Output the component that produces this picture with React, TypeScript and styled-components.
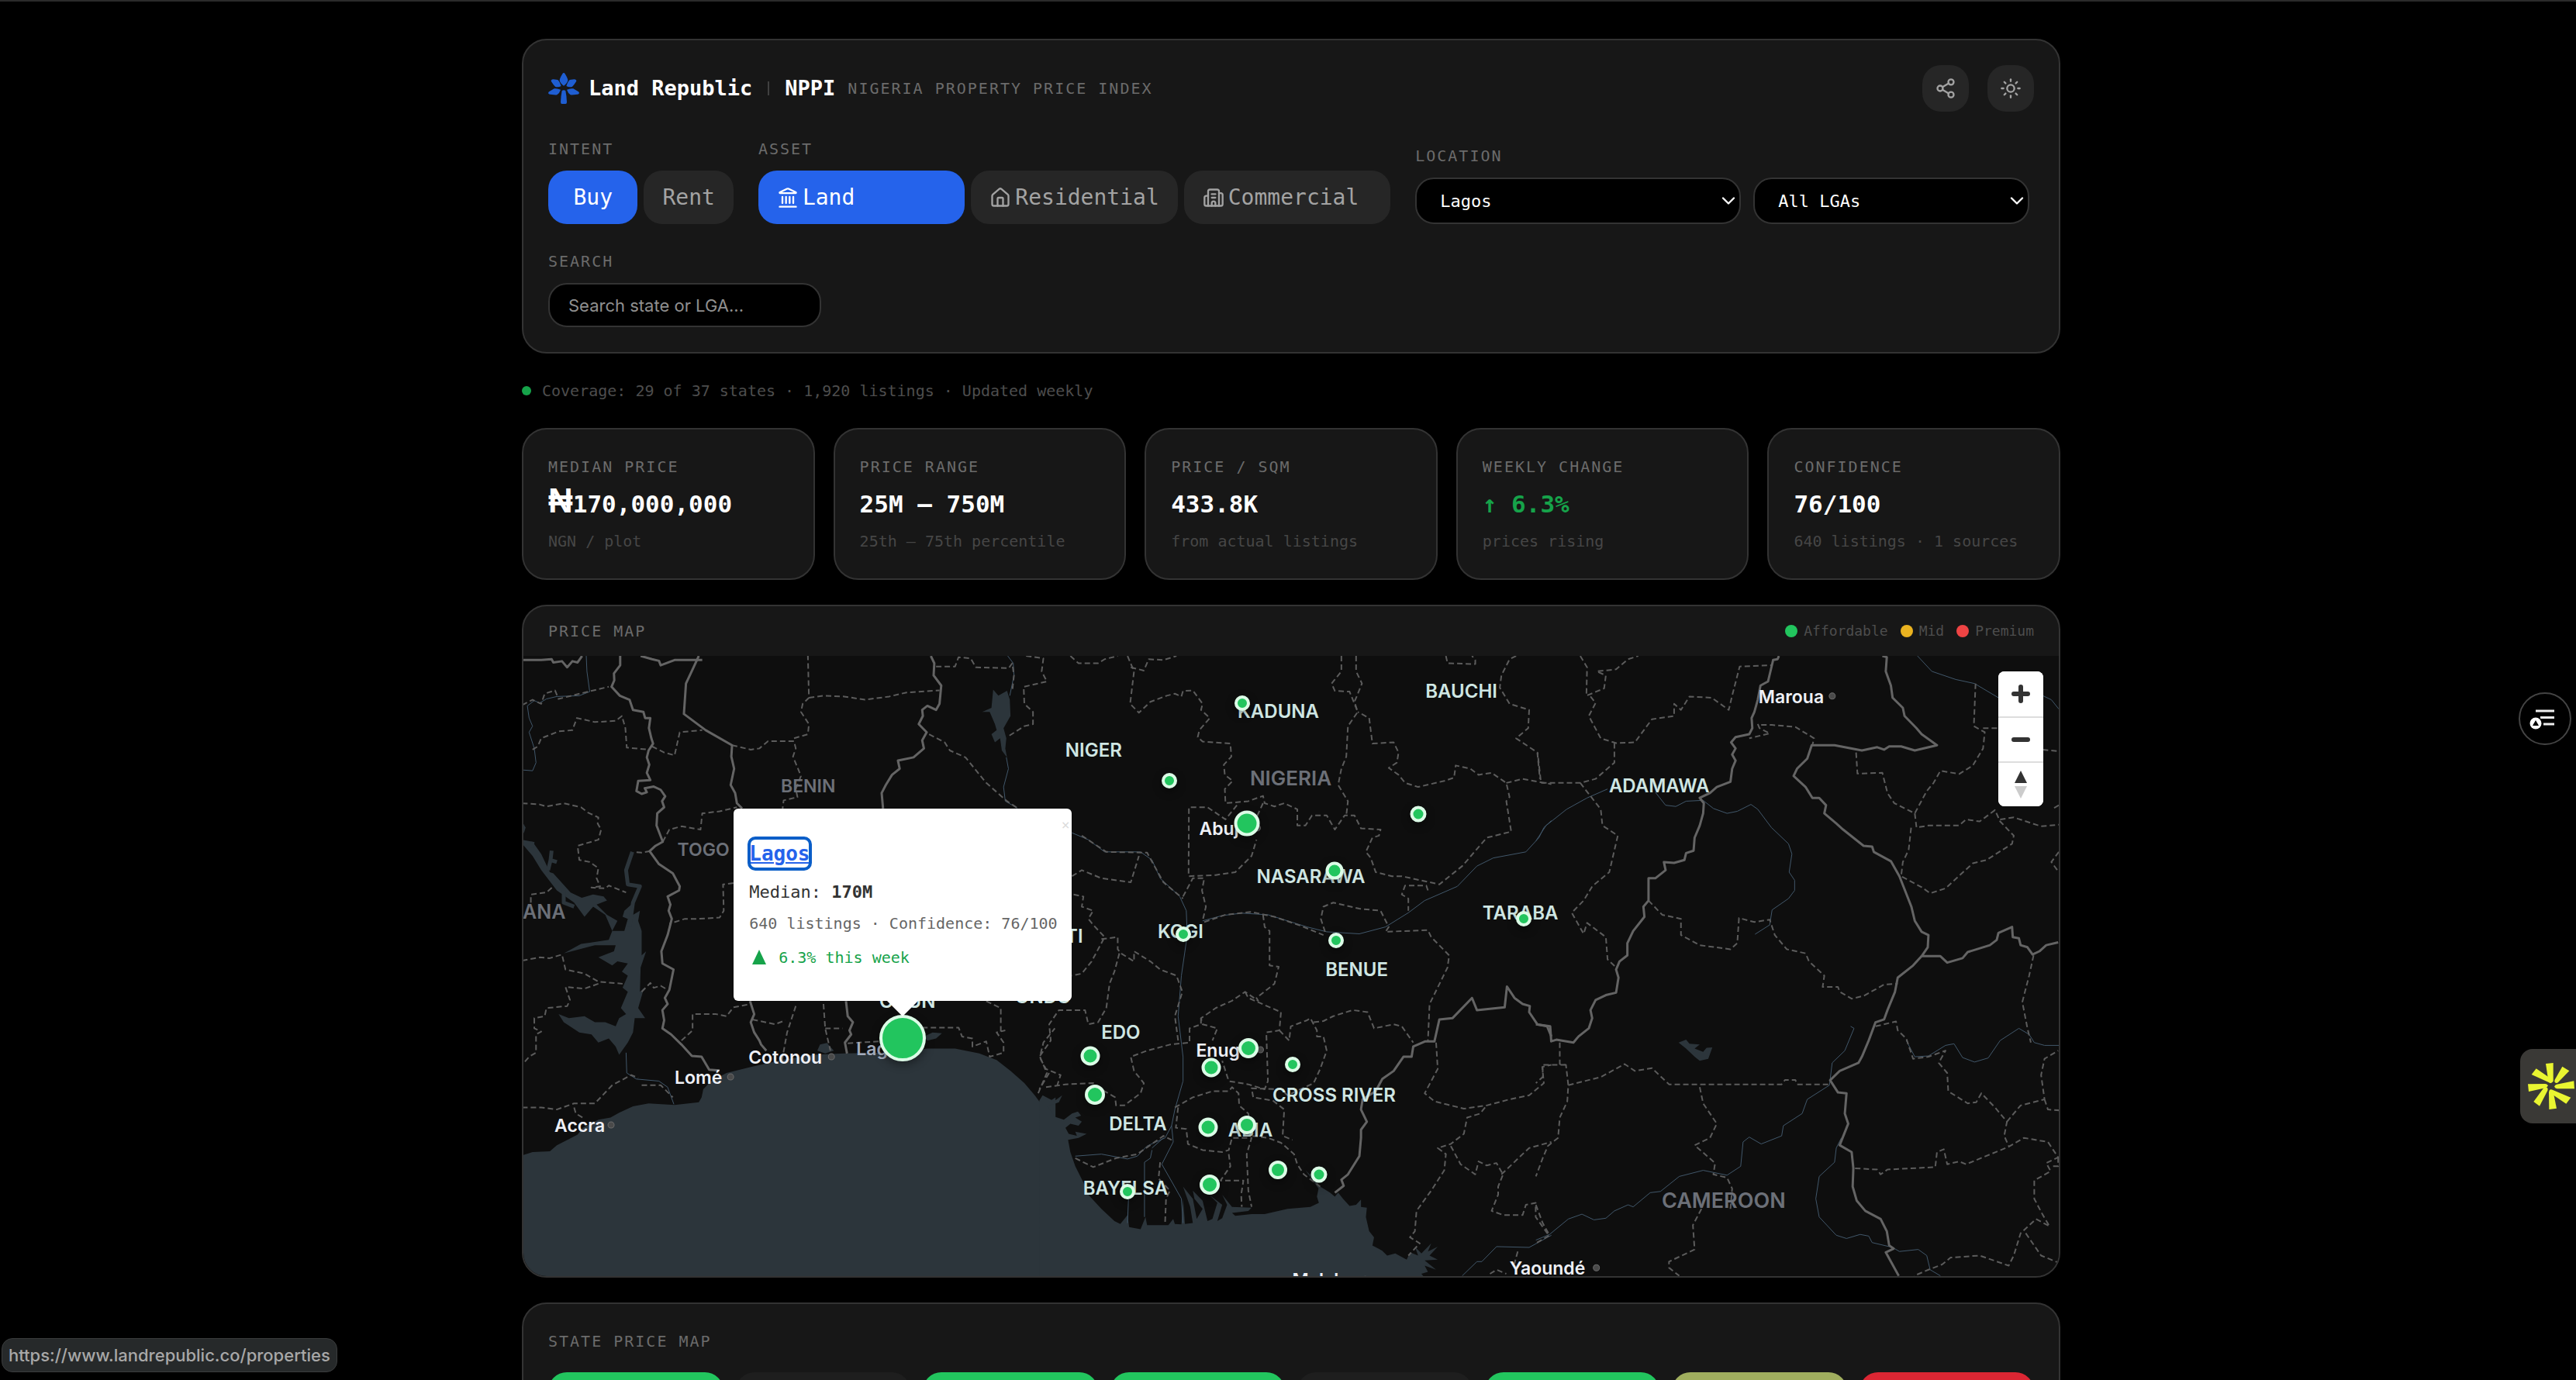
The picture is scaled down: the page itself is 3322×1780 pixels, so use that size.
import React from "react";
import styled, { createGlobalStyle, css } from "styled-components";
import { Building2, ChevronDown, House, Landmark, Share2, Sun } from "lucide-react";

const mono = `"DejaVu Sans Mono", "Liberation Mono", monospace`;
const sans = `Inter, "Liberation Sans", sans-serif`;

const color = {
  card: "#171717",
  line: "#333333",
  control: "#262626",
  label: "#6b6b6b",
  faint: "#4d4d4d",
  muted: "#a3a3a3",
  blue: "#2563eb",
  green: "#22c55e",
  rise: "#16a34a",
};

const GlobalStyle = createGlobalStyle`
  *, *::before, *::after { box-sizing: border-box; }
  body { margin: 0; background: #000; color: #fff; font-family: ${mono}; }
  button, input, select { font: inherit; color: inherit; margin: 0; }
`;

/* ---------- page frame ---------- */

const Page = styled.div`
  height: 100vh;
  overflow: hidden;
  border-top: 2px solid #2b2b2b;
  padding: 48px 0 0 8px;
  background: #000;
`;

const Column = styled.main`
  max-width: 1984px;
  margin: 0 auto;
  display: flex;
  flex-direction: column;
  gap: 32px;
`;

const Card = styled.section`
  background: ${color.card};
  border: 2px solid ${color.line};
  border-radius: 32px;
  padding: 32px;
`;

const Caption = styled.span`
  display: block;
  margin: 0;
  font-size: 20px;
  line-height: 32px;
  letter-spacing: 2px;
  color: ${color.label};
  text-transform: uppercase;
  white-space: nowrap;
  font-weight: 400;
`;

/* ---------- header ---------- */

const HeaderCard = styled(Card)`
  display: flex;
  flex-direction: column;
  gap: 32px;
`;

const Row = styled.div<{ $gap: number }>`
  display: flex;
  align-items: center;
  gap: ${(p) => p.$gap}px;
`;

const TopRow = styled(Row)`
  justify-content: space-between;
`;

const BrandLink = styled.a`
  display: flex;
  align-items: center;
  gap: 12px;
  color: #fff;
  text-decoration: none;
`;

const BrandText = styled.span`
  font-size: 27px;
  line-height: 32px;
  font-weight: 700;
  white-space: nowrap;
`;

const Rule = styled.span`
  width: 2px;
  height: 18px;
  background: #404040;
`;

const IconButton = styled.button`
  width: 60px;
  height: 60px;
  border: 0;
  border-radius: 24px;
  background: ${color.control};
  color: ${color.muted};
  display: grid;
  place-items: center;
  padding: 0;
`;

const Filters = styled.form`
  display: flex;
  flex-wrap: wrap;
  align-items: flex-end;
  gap: 32px;
`;

const Group = styled.div`
  display: flex;
  flex-direction: column;
  gap: 12px;
`;

const PillGrid = styled.div<{ $columns: number }>`
  display: grid;
  grid-template-columns: repeat(${(p) => p.$columns}, 1fr);
  gap: 8px;
`;

const Pill = styled.button<{ $active?: boolean; $start?: boolean }>`
  height: 69px;
  padding: 0 24px;
  border: 0;
  border-radius: 24px;
  display: flex;
  align-items: center;
  justify-content: ${(p) => (p.$start ? "flex-start" : "center")};
  gap: 5px;
  font-size: 28px;
  background: ${(p) => (p.$active ? color.blue : color.control)};
  color: ${(p) => (p.$active ? "#fff" : color.muted)};
`;

const field = css`
  border: 2px solid ${color.line};
  border-radius: 24px;
  background: #000;
  font-size: 22px;
`;

const SelectBox = styled.div<{ $width: number }>`
  position: relative;
  width: ${(p) => p.$width}px;
  svg {
    position: absolute;
    right: 2px;
    top: 16px;
    pointer-events: none;
  }
`;

const Select = styled.select`
  ${field}
  appearance: none;
  width: 100%;
  height: 60px;
  padding: 0 40px 0 30px;
`;

const SearchInput = styled.input`
  ${field}
  width: 352px;
  height: 57px;
  padding: 0 24px;
  font-family: ${sans};
  &::placeholder {
    color: #8f8f8f;
    opacity: 1;
  }
`;

/* ---------- coverage and figures ---------- */

const Coverage = styled.p`
  margin: 0;
  display: flex;
  align-items: center;
  gap: 14px;
  font-size: 20px;
  line-height: 32px;
  color: ${color.faint};
`;

const Dot = styled.span<{ $size: number; $fill: string }>`
  width: ${(p) => p.$size}px;
  height: ${(p) => p.$size}px;
  border-radius: 50%;
  background: ${(p) => p.$fill};
`;

const Stats = styled.div`
  display: grid;
  grid-template-columns: repeat(5, 1fr);
  gap: 24px;
`;

const Value = styled.strong<{ $rise?: boolean }>`
  display: block;
  margin: 8px 0;
  font-size: 31px;
  line-height: 48px;
  height: 48px;
  white-space: nowrap;
  color: ${(p) => (p.$rise ? color.rise : "#fff")};
`;

const Naira = styled.span`
  font-family: "Liberation Sans", sans-serif;
  font-size: 44px;
  line-height: 32px;
`;

const Note = styled.span`
  display: block;
  font-size: 20px;
  line-height: 32px;
  color: #464646;
  white-space: nowrap;
`;

/* ---------- map ---------- */

const MapCard = styled(Card)`
  padding: 0;
  overflow: hidden;
`;

const MapHeader = styled(TopRow)`
  padding: 16px 32px;
`;

const LegendItem = styled(Row)`
  font-size: 18px;
  line-height: 32px;
  color: ${color.faint};
`;

const MapArea = styled.div`
  position: relative;
  height: 800px;
  background: #0e0e0e;
  overflow: hidden;
`;

const MapDrawing = styled.svg`
  display: block;
  width: 100%;
  height: 100%;
  path { vector-effect: non-scaling-stroke; }
  .water { fill: #2c353b; }
  .creek { fill: none; stroke: #2c353b; stroke-width: 5; stroke-linejoin: round; }
  .country { fill: none; stroke: #646464; stroke-width: 3; stroke-linejoin: round; }
  .state { fill: none; stroke: #5c5c5c; stroke-width: 2; stroke-dasharray: 7 4; stroke-linejoin: round; }
  .river { fill: none; stroke: #41576a; stroke-width: 1; }
  text { font-family: ${sans}; font-weight: 600; font-size: 24px; }
  .region { fill: #cfe6e3; text-anchor: middle; }
  .nation { fill: #6c7078; text-anchor: middle; }
  .city { fill: #eef0f6; font-size: 23px; }
  .dim { fill: #a4acbd; }
  .spot { fill: #4a4a4a; stroke: #6a6a6a; }
`;

const Pin = styled.button<{ $x: number; $y: number; $size: number }>`
  position: absolute;
  left: ${(p) => (p.$x / 1979) * 100}%;
  top: ${(p) => p.$y}px;
  width: ${(p) => p.$size}px;
  height: ${(p) => p.$size}px;
  transform: translate(-50%, -50%);
  padding: 0;
  border: 4px solid #dcfce7;
  border-radius: 50%;
  background: ${color.green};
  box-shadow: 0 4px 12px rgba(0, 0, 0, 0.4);
`;

const Popup = styled.div`
  position: absolute;
  left: ${(489 / 1979) * 100}%;
  top: 197px;
  width: 436px;
  height: 248px;
  transform: translateX(-50%);
  padding: 38px 20px 0;
  border-radius: 6px;
  background: #fff;
  color: #262626;
  &::after {
    content: "";
    position: absolute;
    left: 50%;
    top: 100%;
    transform: translateX(-50%);
    border: 20px solid transparent;
    border-top-color: #fff;
    border-bottom: 0;
  }
`;

const PopupClose = styled.button`
  position: absolute;
  right: 0;
  top: 10px;
  width: 16px;
  height: 22px;
  padding: 0;
  border: 0;
  background: none;
  color: #dcdcdc;
  font-size: 18px;
  line-height: 22px;
`;

const PopupLink = styled.a`
  display: block;
  width: max-content;
  margin-bottom: 14px;
  font-size: 26px;
  line-height: 40px;
  font-weight: 700;
  color: ${color.blue};
  text-decoration: underline;
  outline: 4px solid #0a5ec8;
  outline-offset: -2px;
  border-radius: 8px;
`;

const PopupLine = styled.p<{ $size: number; $tone: string; $after: number }>`
  margin: 0 0 ${(p) => p.$after}px;
  font-size: ${(p) => p.$size}px;
  line-height: 32px;
  color: ${(p) => p.$tone};
  white-space: nowrap;
`;

const Triangle = styled.svg`
  width: 18px;
  height: 19px;
  margin: 0 16px 0 4px;
  vertical-align: -2px;
`;

const Controls = styled.div`
  position: absolute;
  right: 20px;
  top: 20px;
  width: 58px;
  border-radius: 8px;
  background: #fff;
  overflow: hidden;
`;

const Control = styled.button`
  display: grid;
  place-items: center;
  width: 58px;
  height: 58px;
  padding: 0;
  border: 0;
  background: #fff;
  & + & {
    border-top: 2px solid #ddd;
  }
`;

/* ---------- state tiles ---------- */

const Tiles = styled.div`
  display: grid;
  grid-template-columns: repeat(8, 1fr);
  gap: 16px;
  margin-top: 24px;
`;

const Tile = styled.div<{ $fill: string }>`
  height: 120px;
  border-radius: 24px;
  background: ${(p) => p.$fill};
`;

/* ---------- floating pieces ---------- */

const StatusUrl = styled.div`
  position: fixed;
  left: 2px;
  bottom: 10px;
  height: 44px;
  padding: 0 8px;
  border: 1px solid #3a3c3d;
  border-radius: 14px;
  background: #26292a;
  color: #a8a8a8;
  font-family: ${sans};
  font-size: 22px;
  line-height: 42px;
  font-weight: 500;
`;

const RoundWidget = styled.button`
  position: fixed;
  right: 6px;
  top: 893px;
  width: 68px;
  height: 68px;
  padding: 0;
  border: 2px solid #444;
  border-radius: 50%;
  background: #000;
`;

const EdgeWidget = styled.button`
  position: fixed;
  right: 0;
  top: 1353px;
  width: 72px;
  height: 96px;
  padding: 0 0 0 8px;
  border: 0;
  border-radius: 16px 0 0 16px;
  background: #3a3936;
  display: grid;
  place-items: center;
`;

/* ---------- data ---------- */

const pins = [
  ["Kaduna", 927, 61, 20],
  ["Niger", 833, 161, 20],
  ["Abuja", 933, 216, 33],
  ["Plateau", 1153, 204, 21],
  ["Nasarawa", 1045, 277, 23],
  ["Kogi", 851, 359, 20],
  ["Benue", 1047, 367, 20],
  ["Taraba", 1289, 339, 20],
  ["Edo", 731, 516, 25],
  ["Delta", 737, 566, 26],
  ["Anambra", 887, 531, 25],
  ["Enugu", 935, 506, 26],
  ["Ebonyi", 991, 527, 20],
  ["Imo", 883, 608, 25],
  ["Abia", 933, 605, 24],
  ["Rivers", 885, 682, 26],
  ["Akwa Ibom", 973, 663, 24],
  ["Cross River", 1025, 669, 21],
  ["Bayelsa", 779, 691, 20],
  ["Lagos", 489, 493, 60],
] as const;

const regions = [
  ["KADUNA", 973, 72], ["BAUCHI", 1209, 46], ["NIGER", 735, 122],
  ["NASARAWA", 1015, 285], ["TARABA", 1285, 332], ["KOGI", 847, 356],
  ["EKITI", 691, 362], ["BENUE", 1074, 405], ["EDO", 770, 486],
  ["CROSS RIVER", 1045, 567], ["DELTA", 792, 604], ["ABIA", 937, 612],
  ["BAYELSA", 776, 687], ["OGUN", 495, 446], ["ONDO", 670, 440],
  ["ADAMAWA", 1464, 168],
] as const;

const nations = [
  ["NIGERIA", 989, 158, 26], ["CAMEROON", 1547, 703, 27], ["BENIN", 367, 167, 23],
  ["TOGO", 232, 249, 23], ["GHANA", 8, 330, 25],
] as const;

const cities = [
  ["Abuja", 871, 222, 946], ["Enugu", 867, 508, 950], ["Malabo", 991, 804, 1085],
  ["Yaoundé", 1271, 789, 1383], ["Maroua", 1592, 52, 1687], ["Accra", 40, 605, 113],
  ["Lomé", 195, 543, 267], ["Cotonou", 290, 517, 397],
] as const;

/* Each sheet is digitised on its own grid and placed on the map by its matrix. */
const sheets = [
  {
    matrix: "matrix(.4464 0 0 .523 -15 -6)",
    water: [
      "M30 1243 60 1235 110 1233 130 1218 165 1203 190 1192 205 1175 250 1155 285 1150 310 1138 350 1122 395 1115 470 1119 540 1112 548 1100 553 1080 575 1060 620 1040 690 1025 780 1008 870 995 960 992 1080 990 1200 980 1280 980 1350 992 1400 1008 1440 1035 1480 1065 1510 1095 1545 1135 1570 1160V1560H30Z",
      "M30 465 60 470 85 500 110 545 120 548 170 595 202 608 235 600 265 605 275 615 245 625 275 650 305 665 290 690 325 690 335 660 320 655 325 640 345 625 350 650 370 640 365 665 375 690 375 750 388 740 372 780 370 840 382 830 365 880 385 905 355 905 350 940 335 965 310 995 300 975 280 955 250 965 230 945 195 940 150 915 135 895 165 905 210 900 240 915 270 915 300 925 310 905 330 895 315 880 325 860 335 840 320 830 335 800 318 790 335 770 305 765 290 775 250 755 295 740 300 725 240 725 150 745 200 722 280 712 290 690 270 650 235 630 210 655 180 620 130 590 85 540 60 505 30 475Z",
      "M30 420 40 435 35 448 30 450Z",
      "M1390 95 1405 110 1430 98 1438 120 1440 160 1420 190 1428 215 1425 240 1430 262 1415 245 1410 215 1395 225 1385 205 1400 195 1395 180 1380 150 1358 150 1385 140Z",
      "M882 985 890 970 910 966 930 985 905 992Z",
      "M1190 950 1215 940 1242 942 1225 955 1200 960Z",
      "M1543 1115 1570 1100V1160L1548 1140Z",
    ],
    creek: [
      "M348 495 330 540 335 575 370 580 350 620 340 680",
      "M105 540 112 515 130 520M112 515 115 492M60 470 58 485M150 590 150 620 180 630",
    ],
    country: [
      "M30 22 85 22 115 20 120 28 145 25 160 40 175 25 190 28 203 12",
      "M372 12 405 20 425 24 430 35 470 22 550 22",
      "M313 12 313 35 295 55 296 72 288 88 312 110 340 120 350 145 380 150 385 165 400 165 396 190 403 215 408 228 395 245 390 262 397 280 390 300 400 318 365 320 360 345 375 352 390 348 384 338 410 334 430 342 443 358 434 370 440 385 420 400 418 430 436 470 415 480 398 493 425 525 465 548 485 580 483 590 450 605 458 625 453 640 462 660 450 700 432 740 435 770 467 785 455 835 442 855 450 870 435 885 440 910 435 930 460 945 490 970 520 998 548 1000 570 1032 600 1034",
      "M540 12 525 40 503 80 497 155 560 195 636 232 634 260 642 290 632 330 645 350 650 375 665 388",
      "M688 863 700 895 690 915 700 940 715 960 720 970 735 985",
      "M1210 12 1220 30 1218 60 1240 85 1235 130 1225 145 1200 135 1185 145 1187 160 1175 180 1198 200 1185 220 1190 240 1160 262 1115 270 1120 290 1098 305 1080 330 1068 350 1072 388",
      "M965 863 970 900 985 915 975 935 980 945 962 965 968 992",
    ],
    state: [
      "M30 133 60 120 85 130 95 105 125 97 135 118 220 100 280 88",
      "M60 243 75 235 85 215 135 198 175 195 188 165 240 175 300 172 318 160 328 190 332 238 395 243",
      "M405 235 440 250 470 257 485 200 550 195",
      "M636 232 690 243 715 240 740 222 815 222 820 240 812 260 835 308 820 340 825 360 785 368 782 388",
      "M815 215 855 205 858 180 835 150 840 130 858 115 855 12",
      "M858 115 900 110 960 112 1020 120 1090 112 1140 102 1235 97",
      "M1225 38 1280 38 1290 15 1325 18 1340 40 1435 42 1445 30 1450 60 1445 100",
      "M30 375 80 378 100 383 150 375 200 385 220 398 250 410 248 425 258 440 250 465 190 480 195 515 225 520 250 535 245 560 255 580 230 583 270 585 280 578 330 595",
      "M55 620 55 600 100 595 120 580",
      "M400 493 375 497 352 495M436 470 455 440 490 432 545 440 550 400 600 395 650 385",
      "M640 572 610 575 612 640 600 657 540 660 500 660 455 672",
      "M30 763 80 755 110 757 145 748 155 785 210 795 250 815 320 820",
      "M250 820 210 832 155 828 168 860 160 875 100 880 95 900 65 905 65 930 85 938 70 945 70 990 50 1000 30 1020",
      "M375 840 400 818 410 830 430 825 450 835",
      "M490 960 522 935 522 895 590 895 620 900 640 878 690 870",
      "M695 908 760 920 790 910M780 1010 795 940 820 875",
      "M900 870 905 930 920 985M905 930 955 930M970 967 1060 962",
      "M1185 928 1290 928 1300 950 1330 955 1330 975 1370 962 1380 1000 1420 990 1420 965 1400 940 1425 935M1370 863 1412 880 1412 940",
      "M1520 1090 1545 1040 1525 1000 1535 965 1568 930",
      "M30 1125 85 1125 130 1130 180 1115 240 1115 290 1070 345 1045 365 1052M375 1070 430 1070 465 1100M180 1125 185 1140 205 1150",
      "M1205 205 1250 225 1265 245 1310 262 1370 325 1430 370 1460 387",
      "M1485 12 1535 18 1530 50 1545 75 1478 88 1480 130 1505 150 1505 180 1480 185 1430 212",
    ],
    river: [
      "M215 12 217 50 225 100 195 110 130 112 100 118 80 128 65 122 45 135 50 165 60 185 50 200 65 240 70 275 60 295 30 293",
      "M1432 12 1448 30 1450 60 1438 110M1428 262 1434 290 1420 335 1425 370 1460 387",
      "M330 990 332 1040 360 1055 425 1060 450 1075 468 1117",
    ],
  },
  {
    matrix: "matrix(.4209 0 0 .523 665 -6)",
    water: [
      "M0 1108 10 1095 45 1110 70 1095 60 1112 25 1122 48 1148 75 1155 100 1140 118 1135 128 1145 110 1150 130 1160 120 1170 95 1165 80 1175 90 1190 115 1195 110 1185 145 1190 120 1200 88 1205 95 1235 110 1270 135 1310 150 1340 190 1375 230 1405 248 1412 270 1390 275 1420 310 1425 325 1395 330 1415 395 1415 410 1400 415 1412 435 1413 440 1350 446 1412 470 1410 462 1370 440 1320 470 1350 482 1400 500 1375 475 1350 470 1330 500 1355 515 1405 530 1400 545 1360 520 1340 560 1365 545 1405 560 1398 575 1365 560 1340 590 1370 650 1372 640 1380 590 1385 600 1392 650 1388 690 1388 760 1375 830 1370 856 1360 850 1345 855 1325 815 1280 835 1295 860 1320 890 1335 905 1345 915 1335 930 1350 950 1368 970 1365 985 1352 985 1370 1003 1372 1000 1395 1010 1430 1025 1445 1020 1465 1050 1478 1065 1490 1090 1485 1125 1500 1135 1482 1160 1490 1150 1468 1170 1485 1200 1460 1190 1480 1220 1468 1195 1490 1220 1500 1180 1502 1215 1525 1180 1515 1190 1530 1170 1535 1180 1545V1570H0Z",
    ],
    creek: [],
    country: [
      "M1568 950 1555 925 1525 920 1500 890 1502 875 1480 870 1455 855 1432 827 1425 878 1340 885 1325 855 1265 905 1225 908 1210 962 1182 962 1145 975 1140 1000 1115 1000 1085 1035 1050 1055 1030 1085 990 1105 985 1130 1003 1160 985 1180 985 1200 980 1245 945 1290 925 1303 932 1318 905 1335",
    ],
    state: [
      "M95 12 120 30 180 30 200 20 240 12",
      "M270 12 290 50 278 130 305 152 340 125 390 110 415 105 435 112 440 98 470 97 500 130 495 145 522 165 490 195 485 212 500 223 585 228 588 260 565 280 568 305 592 320 568 340 570 375 640 370 685 357 690 375 720 383 750 375 790 390 790 430 815 430 835 405 880 405 905 440 935 405 965 405 985 437 1045 440 1040 455 1020 460 1000 495 1015 510 1030 545 1080 555 1110 555 1225 575 1295 530 1370 460 1445 445 1430 370 1440 360 1430 325 1385 300 1345 305 1320 290 1275 282 1270 312 1240 320 1160 335 1120 325 1100 305 1070 288 1095 275 1100 250 1085 225 1020 228 1010 165 975 150",
      "M280 40 320 48 335 20 380 22 420 12",
      "M605 380 570 415 515 385 458 385 457 555 540 552 600 545 650 505 665 465M685 375 665 410",
      "M925 12 925 50 895 80 905 98 950 100 975 150 945 185 940 260 925 290 915 330 945 370 940 405",
      "M970 12 970 50 988 80 965 125 975 150",
      "M1460 12 1440 20 1415 60 1410 90 1440 130 1500 145 1497 190 1460 215 1525 250 1533 315M1430 325 1480 315 1568 328",
      "M1245 12 1250 30 1335 32 1335 22 1325 12",
      "M1190 590 1185 578 1120 578 1110 600 1130 610 1130 640",
      "M505 668 570 650 650 643 720 655 800 677 870 700M875 692 862 660 870 630 900 620 980 635 1045 640 1070 680 1060 692 1190 688 1200 705 1255 750 1250 780 1195 870 1190 960",
      "M685 650 690 680 705 690 705 775 733 778 720 820 665 855 670 862 630 840 590 862 540 880 495 905 500 920 545 930 530 960",
      "M495 905 495 920 460 930 460 965 400 970 330 985 280 1000 290 1035 320 1065 310 1090 260 1120 235 1120 232 1100 200 1085 165 1065 80 1068 20 1075M630 840 640 855 740 890 735 935 695 940 700 1060 690 1080 640 1068 580 1060 560 1010",
      "M130 455 205 495 330 497 380 570 440 610M100 555 130 540 190 560 280 570 305 505",
      "M440 605 470 560 505 560 498 590 510 630 500 665",
      "M105 600 135 605 130 630 165 640 150 660 165 675 200 705 160 765 130 795 100 800M190 710 240 705 240 735 250 745 290 765 290 740 340 765 370 785 420 800 438 840 415 900 425 960",
      "M245 745 230 790 215 820 205 880 180 915 150 920 140 885 60 885 30 920 35 960 0 1000 20 1030 65 1045 55 1070M30 1040 0 1080",
      "M735 935 765 960 770 925 820 910 830 905 850 935 850 950 870 950 880 985 860 1030 840 1065 760 1095 740 1080 650 1078 655 1100 715 1108",
      "M840 915 870 912 900 900 960 885 1005 890 1025 930 1085 920 1110 925 1145 965",
      "M415 1125 470 1100 530 1085 580 1085 590 1075 610 1090 612 1120 640 1140 650 1195 700 1200 740 1212 780 1240 790 1265 810 1290 860 1320",
      "M425 1125 418 1175 450 1178 455 1215 500 1230 560 1235 580 1230 590 1200 650 1200 635 1240 640 1330 650 1370",
      "M715 1108 750 1130 745 1195 775 1205",
      "M580 1240 585 1270 555 1305 625 1305 618 1340 620 1370",
      "M370 1260 365 1300 400 1330 388 1350 385 1410M110 1250 165 1272 235 1250 300 1240 380 1195 405 1205",
      "M1215 965 1220 1030 1180 1090 1210 1110 1250 1118 1300 1128 1370 1120 1440 1105 1500 1095 1545 1065 1540 1025 1568 1020",
      "M1365 1125 1350 1140 1310 1150 1300 1190 1260 1215 1220 1225 1245 1240 1240 1280 1200 1330 1155 1380 1150 1430 1135 1445 1165 1460 1130 1490",
      "M1260 1220 1290 1265 1335 1290 1345 1258 1370 1268 1400 1262 1420 1290 1405 1320 1405 1340 1385 1380 1420 1390 1480 1390 1490 1365 1520 1360 1520 1395 1560 1440",
      "M1415 1290 1480 1240 1500 1225 1568 1210M1380 1535 1400 1525 1430 1535M1465 1480 1455 1510",
    ],
    river: [
      "M500 665 560 652 620 646 700 650 760 665 820 680 880 692 980 697 1060 680 1130 645 1180 615 1280 580 1340 530 1390 510 1490 495 1530 460 1545 435 1568 418",
      "M100 448 150 465 200 495 310 495 345 515 370 560 430 605 450 640 453 700 435 800 425 900 440 1000 440 1060 415 1130 405 1170 385 1200 330 1220 300 1245 270 1252 190 1240 110 1245",
      "M405 1170 410 1210 375 1265 400 1300 435 1350 440 1410M345 1230 340 1250 322 1260 322 1395M273 1350 270 1410M380 1200 345 1225",
      "M1295 1540 1340 1505 1355 1505 1400 1468 1500 1470 1568 1440",
    ],
  },
  {
    matrix: "matrix(.44 0 0 .523 1305 -6)",
    water: [
      "M418 965 440 958 450 968 480 970 465 980 490 988 500 978 517 977 505 1005 480 1010 465 1000 440 980Z",
    ],
    creek: [],
    country: [
      "M712 12 708 20 695 22 690 40 680 75 658 85 650 120 640 150 632 165 634 190 625 205 585 212 572 225 585 240 575 255 585 270 575 290 570 322 530 335 510 350 480 362 492 375 490 400 480 430 465 460 462 492 440 498 435 515 405 522 375 520 380 540 350 560 330 560 330 615 315 630 318 655 285 690 268 720 268 750 245 765 235 785 242 805 235 842 205 848 175 860 160 885 165 905 155 930 125 950 110 965 60 958 45 962 42 925 0 920",
      "M1015 12 1028 15 1025 50 1040 85 1045 115 1075 140 1080 160 1115 190 1130 205 1175 232 1110 245 1070 235 1035 235 1020 243 1000 237 955 245 875 232 808 232 795 265 765 290 755 308 790 335 810 362 830 362 850 380 845 400 880 425 900 440 960 480 985 482 990 495 1040 518 1065 555 1100 630 1110 665 1130 692 1150 700 1148 730 1130 752 1185 752 1205 768 1250 757 1265 742 1330 725 1350 712 1355 695 1395 680 1397 705 1415 708 1420 725 1440 730 1455 748 1475 740 1495 725 1530 718",
      "M1130 752 1105 775 1060 805 1052 840 1030 885 1020 908 995 915 975 960 955 1000 945 1015 890 1035 862 1058 885 1088 910 1090 905 1140 915 1165 890 1218 925 1235 930 1275 928 1320 940 1355 965 1380 1010 1400 1028 1430 1035 1465 1048 1473 1025 1482 1063 1540",
    ],
    state: [
      "M130 12 150 40 148 110 200 92 205 60 178 50 235 45 270 20 300 12",
      "M160 112 175 128 155 160 190 215 235 227 290 225 340 168 405 160 405 130 425 145 450 112 515 115 565 145 575 110 597 38 690 35",
      "M230 227 230 275 175 315 130 325 15 325 5 250",
      "M130 325 190 390 195 430 240 455 215 545 165 580 140 615 105 645 140 697 150 670 205 705 210 760 235 780",
      "M330 615 370 650 425 660 425 700 480 725 570 735 590 720 595 658 640 668 685 662 700 700 735 735 790 745 800 765 845 800 840 828 885 828 890 840 925 857 960 850 1020 822 1060 820",
      "M650 180 655 190 685 203 625 215M660 182 690 182 760 187 815 215 810 232",
      "M938 250 942 302 1015 300 1030 350 1050 375 1110 400 1145 345 1165 325 1185 295 1240 303 1280 282 1310 240 1315 200 1283 185 1288 80M1310 190 1355 190M1485 243 1532 247",
      "M1110 400 1115 435 1150 430 1240 430 1260 415 1300 420 1345 392 1360 420 1400 455 1395 475 1320 515 1280 523 1200 585 1155 597 1130 582 1070 555 1075 520 1092 490 1100 430",
      "M1360 415 1400 410 1480 432 1532 428M1532 495 1510 520 1532 545M1532 380 1515 388",
      "M995 925 1055 913 1060 935 1085 955 1105 1005 1150 1000 1200 985 1180 1015 1205 1040 1208 1085 1265 1115 1290 1112 1305 1090 1345 1125 1380 1160 1372 1195 1385 1220",
      "M1380 1160 1420 1120 1490 1105 1480 1045 1490 1005 1530 985M1490 1105 1500 1130 1532 1132",
      "M1458 750 1445 800 1425 865 1440 930 1450 965",
      "M935 1275 1000 1278 1010 1290 1030 1278 1170 1272 1175 1235 1195 1228 1205 1265 1240 1258 1260 1265 1385 1222 1430 1200 1500 1210 1530 1248 1495 1262 1508 1282 1460 1305 1460 1350 1485 1390 1505 1418 1465 1400 1420 1435 1400 1490 1385 1515 1300 1490 1215 1495 1190 1512 1150 1525 1108 1540",
      "M1435 1435 1480 1490 1532 1508M1530 1248V1270H1508",
      "M95 1070 190 1050 260 1018 290 1035 340 1028 390 1068 720 1068 730 1057 760 1057 765 1068 860 1068",
      "M70 965 70 1018 88 1020 95 1070 92 1110 70 1150 65 1200 35 1220 20 1250 0 1295M88 1020 20 1020 20 1050 0 1065",
      "M480 1075 490 1115 530 1165 510 1200 465 1218 525 1262 520 1290 560 1298 575 1325 570 1375",
      "M485 1375 460 1415 465 1475 390 1505 390 1520 420 1540M0 1365 20 1410 40 1440 0 1460",
    ],
    river: [
      "M0 468 30 430 90 390 150 362 210 340M350 348 380 380 410 383 440 370 490 368 520 388 560 400 590 395 630 378 650 390 690 435 740 475 750 500 742 545 758 565 758 590 740 610 692 638 685 675 642 698",
      "M0 1452 40 1438 95 1400 135 1388 170 1402 205 1398 230 1380 270 1365 285 1370 335 1335 365 1332 420 1295 490 1280 560 1292 600 1270 607 1210 625 1198 660 1215 720 1195 725 1170 780 1140 795 1105 860 1070 868 1015 905 985 932 930 922 925",
      "M895 1200 880 1225 875 1260 830 1295 820 1350 830 1395 880 1440 910 1448 950 1438 975 1442 985 1458 1045 1470 1065 1480 1120 1475 1145 1490 1155 1525 1185 1540",
      "M1118 12 1160 50 1230 70 1285 80 1355 115M1485 110 1510 120 1532 143",
      "M1085 960 1110 1000 1150 998 1200 972 1225 968 1250 1002 1285 1013 1325 1003 1360 960 1415 930 1445 945 1460 965 1490 972 1532 972",
    ],
  },
];

const layers = ["water", "creek", "river", "state", "country"] as const;

const tileFills = [
  color.green, "#1e1e1e", color.green, color.green,
  "#1e1e1e", color.green, "#a0ae5e", "#dc2633",
];

/* ---------- drawings ---------- */

const Logo = () => (
  <svg width="40" height="40" viewBox="0 0 120 120" fill="#1f5ed2" aria-hidden="true">
    <path d="M60 0q3 0 5 4 11 18 11 25-2 11-16 21-14-10-16-21 0-7 11-25 2-4 5-4Z" />
    <path d="M12 28q2-3 8-3l17 2q7 6 13 24-9 5-22 3-6-5-16-20-2-3 0-6Z" />
    <path d="M108 28q-2-3-8-3l-17 2q-7 6-13 24 9 5 22 3 6-5 16-20 2-3 0-6Z" />
    <path d="M1 80q-2-3 2-7l20-12q12-2 25 4-4 13-14 20-6 1-26-2-5 0-7-3Z" />
    <path d="M119 80q2-3-2-7L97 61q-12-2-25 4 4 13 14 20 6 1 26-2 5 0 7-3Z" />
    <path d="M53 69q7-4 14 0 4 20 5 44 0 7-5 7H53q-5 0-5-7 1-24 5-44Z" />
  </svg>
);

const Burst = () => (
  <svg width="60" height="60" viewBox="0 0 180 180" fill="#e9f531" aria-hidden="true">
    <path d="M69 3 98 0 98 70q-4 9-12 8-5-1-7-9Z" />
    <path d="M133 14 160 31 117 75q-6 6-12 1-4-5-1-11Z" />
    <path d="M178 70 180 100 113 100q-10-2-10-9 1-6 8-8Z" />
    <path d="M166 134 148 158 87 117q-6-6-4-11 4-5 12-2Z" />
    <path d="M111 176 82 180 81 112q3-8 9-8 6 1 8 8Z" />
    <path d="M45 167 22 150 61 97q7-5 13-2 5 5 2 12Z" />
    <path d="M3 111 0 82 66 81q10 1 11 7-1 6-9 9Z" />
    <path d="M14 45 32 22 91 62q6 6 3 12-5 5-12 2Z" />
  </svg>
);

const ListGlyph = () => (
  <svg width="64" height="64" viewBox="0 0 64 64" aria-hidden="true">
    <path d="M20 22h24M26 30.500h18M30 39h14" stroke="#eee" strokeWidth="3" />
    <circle cx="20" cy="38" r="9" fill="#000" />
    <circle cx="20" cy="38" r="7.500" fill="#fff" />
    <path d="m20 34 4 7h-8Z" fill="#000" />
  </svg>
);

const MapArt = () => (
  <MapDrawing viewBox="0 0 1979 800" preserveAspectRatio="xMidYMid slice">
    {layers.map((layer) =>
      sheets.map((sheet) => (
        <g key={layer + sheet.matrix} transform={sheet.matrix}>
          {sheet[layer].map((d) => (
            <path key={d} className={layer} d={d} />
          ))}
        </g>
      ))
    )}
    {nations.map(([name, x, y, size]) => (
      <text key={name} className="nation" x={x} y={y + 9} style={{ fontSize: size }}>{name}</text>
    ))}
    {regions.map(([name, x, y]) => (
      <text key={name} className="region" x={x} y={y + 8}>{name}</text>
    ))}
    {cities.map(([name, x, y, dot]) => (
      <g key={name}>
        <circle className="spot" cx={dot} cy={y} r="4" />
        <text className="city" x={x} y={y + 9}>{name}</text>
      </g>
    ))}
    <text className="city dim" x="429" y="515">Lagos</text>
  </MapDrawing>
);

/* ---------- sections ---------- */

const Stat = ({ label, note, rise, children }: {
  label: string; note: string; rise?: boolean; children: React.ReactNode;
}) => (
  <Card as="article">
    <Caption>{label}</Caption>
    <Value $rise={rise}>{children}</Value>
    <Note>{note}</Note>
  </Card>
);

const Legend = ({ fill, children }: { fill: string; children: string }) => (
  <LegendItem $gap={8}>
    <Dot $size={16} $fill={fill} />
    {children}
  </LegendItem>
);

export default function App() {
  return (
    <Page>
      <GlobalStyle />
      <Column>
        <HeaderCard as="header">
          <TopRow $gap={24}>
            <Row $gap={20}>
              <BrandLink href="#home">
                <Logo />
                <BrandText>Land Republic</BrandText>
              </BrandLink>
              <Rule />
              <Row $gap={16}>
                <BrandText>NPPI</BrandText>
                <Caption>Nigeria Property Price Index</Caption>
              </Row>
            </Row>
            <Row $gap={24}>
              <IconButton aria-label="Share"><Share2 size={28} /></IconButton>
              <IconButton aria-label="Light theme"><Sun size={28} /></IconButton>
            </Row>
          </TopRow>

          <Filters onSubmit={(e) => e.preventDefault()}>
            <Group role="group" aria-labelledby="intent">
              <Caption id="intent">Intent</Caption>
              <PillGrid $columns={2}>
                <Pill type="button" $active>Buy</Pill>
                <Pill type="button">Rent</Pill>
              </PillGrid>
            </Group>
            <Group role="group" aria-labelledby="asset">
              <Caption id="asset">Asset</Caption>
              <PillGrid $columns={3}>
                <Pill type="button" $active $start><Landmark size={28} />Land</Pill>
                <Pill type="button" $start><House size={28} />Residential</Pill>
                <Pill type="button" $start><Building2 size={28} />Commercial</Pill>
              </PillGrid>
            </Group>
            <Group>
              <Caption as="label" htmlFor="state">Location</Caption>
              <Row $gap={16}>
                <SelectBox $width={420}>
                  <Select id="state" defaultValue="Lagos"><option>Lagos</option></Select>
                  <ChevronDown size={28} />
                </SelectBox>
                <SelectBox $width={356}>
                  <Select aria-label="LGA" defaultValue="All LGAs"><option>All LGAs</option></Select>
                  <ChevronDown size={28} />
                </SelectBox>
              </Row>
            </Group>
            <Group>
              <Caption as="label" htmlFor="search">Search</Caption>
              <SearchInput id="search" placeholder="Search state or LGA..." />
            </Group>
          </Filters>
        </HeaderCard>

        <Coverage>
          <Dot $size={12} $fill={color.rise} />
          Coverage: 29 of 37 states · 1,920 listings · Updated weekly
        </Coverage>

        <Stats>
          <Stat label="Median Price" note="NGN / plot"><Naira>₦</Naira>170,000,000</Stat>
          <Stat label="Price Range" note="25th – 75th percentile">25M – 750M</Stat>
          <Stat label="Price / sqm" note="from actual listings">433.8K</Stat>
          <Stat label="Weekly Change" note="prices rising" rise>↑ 6.3%</Stat>
          <Stat label="Confidence" note="640 listings · 1 sources">76/100</Stat>
        </Stats>

        <MapCard>
          <MapHeader $gap={24}>
            <Caption as="h2">Price Map</Caption>
            <Row $gap={16}>
              <Legend fill={color.green}>Affordable</Legend>
              <Legend fill="#eab320">Mid</Legend>
              <Legend fill="#ef4444">Premium</Legend>
            </Row>
          </MapHeader>
          <MapArea>
            <MapArt />
            {pins.map(([name, x, y, size]) => (
              <Pin key={name} aria-label={name} $x={x} $y={y} $size={size} />
            ))}
            <Popup>
              <PopupClose aria-label="Close popup">×</PopupClose>
              <PopupLink href="#properties">Lagos</PopupLink>
              <PopupLine $size={22} $tone="#333" $after={8}>Median: <b>170M</b></PopupLine>
              <PopupLine $size={20} $tone="#666" $after={12}>640 listings · Confidence: 76/100</PopupLine>
              <PopupLine $size={20} $tone={color.rise} $after={0}>
                <Triangle viewBox="0 0 18 19" aria-hidden="true">
                  <path d="M9 0 18 19H0Z" fill={color.rise} />
                </Triangle>
                6.3% this week
              </PopupLine>
            </Popup>
            <Controls>
              <Control aria-label="Zoom in">
                <svg width="24" height="24" viewBox="0 0 24 24" stroke="#333" strokeWidth="6" strokeLinecap="round">
                  <path d="M12 3v18M3 12h18" />
                </svg>
              </Control>
              <Control aria-label="Zoom out">
                <svg width="24" height="24" viewBox="0 0 24 24" stroke="#333" strokeWidth="6" strokeLinecap="round">
                  <path d="M3 12h18" />
                </svg>
              </Control>
              <Control aria-label="Reset bearing">
                <svg width="16" height="36" viewBox="0 0 16 36">
                  <path d="m8 0 8 16H0Z" fill="#333" />
                  <path d="m8 36 8-16H0Z" fill="#ccc" />
                </svg>
              </Control>
            </Controls>
          </MapArea>
        </MapCard>

        <Card>
          <Caption as="h2">State Price Map</Caption>
          <Tiles>
            {tileFills.map((fill, i) => (
              <Tile key={i} $fill={fill} />
            ))}
          </Tiles>
        </Card>
      </Column>

      <RoundWidget aria-label="Reading list"><ListGlyph /></RoundWidget>
      <EdgeWidget aria-label="Assistant"><Burst /></EdgeWidget>
      <StatusUrl>https://www.landrepublic.co/properties</StatusUrl>
    </Page>
  );
}
